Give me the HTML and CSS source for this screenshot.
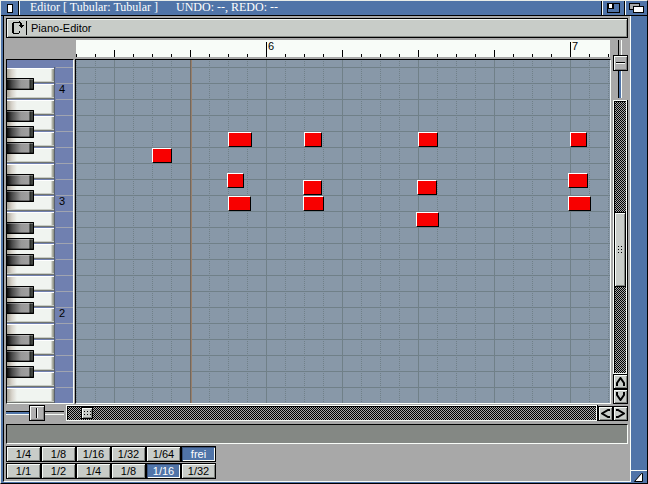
FILE: index.html
```
<!DOCTYPE html>
<html lang="de">
<head>
<meta charset="utf-8">
<title>Piano-Editor</title>
<link rel="stylesheet" href="styles.css">
</head>
<body>
<div class="window">
  <header class="titlebar">
    <button class="gadget close" aria-label="Close"><svg width="6" height="9"><path d="M0 0h6v9H0z"/><path fill="#fff" d="M1 1h4v7H1z"/></svg></button>
    <h1 class="title"><span>Editor [ Tubular: Tubular ]</span><span>UNDO: --, REDO: --</span></h1>
    <button class="gadget zoom" aria-label="Zoom"><svg width="13" height="10"><path fill-rule="evenodd" d="M0 0h13v10H0zM1 1v8h11V1z"/><path d="M1 1h6v5H1z"/><path fill="#fff" d="M2 1h3v4H2z"/></svg></button>
    <button class="gadget depth" aria-label="Depth"><svg width="15" height="10"><path d="M0 0h11v7H0z"/><path fill="#a8a8a8" d="M1 1h9v5H1z"/><path d="M4 3h11v7H4z"/><path fill="#fff" d="M5 4h9v5H5z"/></svg></button>
  </header>
  <div class="frame">
    <main class="content">
      <button class="cycle">
        <svg width="12" height="14"><path d="M1 1h6v1H2v10h5v1H1V12H0V2h1zM7 10h1v2H7zM7 0h1v1h1v1h1v2h2v1h-1v1h-1v1H9V6H8V5H7V4h1V2H7z"/></svg>
        <span class="cycle-label">Piano-Editor</span>
      </button>
      <section class="editor">
        <div class="ruler"><span>6</span><span>7</span></div>
        <div class="piano">
          <div class="keys">
            <i class="key sharp"></i><i class="key"></i><i class="key sharp"></i><i class="key sharp"></i><i class="key sharp"></i><i class="key"></i><i class="key sharp"></i>
            <i class="key sharp"></i><i class="key"></i><i class="key sharp"></i><i class="key sharp"></i><i class="key sharp"></i><i class="key"></i><i class="key sharp"></i>
            <i class="key sharp"></i><i class="key"></i><i class="key sharp"></i><i class="key sharp"></i><i class="key sharp"></i><i class="key"></i><i class="key"></i>
          </div>
          <div class="octaves"><span>4</span><span>3</span><span>2</span></div>
        </div>
        <div class="roll">
          <i class="playhead"></i>
          <i class="note" style="left:76px;top:88px;width:20px"></i>
          <i class="note" style="left:152px;top:72px;width:24px"></i>
          <i class="note" style="left:151px;top:113px;width:17px"></i>
          <i class="note" style="left:152px;top:136px;width:23px"></i>
          <i class="note" style="left:228px;top:72px;width:18px"></i>
          <i class="note" style="left:227px;top:120px;width:19px"></i>
          <i class="note" style="left:227px;top:136px;width:21px"></i>
          <i class="note" style="left:342px;top:72px;width:20px"></i>
          <i class="note" style="left:341px;top:120px;width:20px"></i>
          <i class="note" style="left:340px;top:152px;width:23px"></i>
          <i class="note" style="left:494px;top:72px;width:17px"></i>
          <i class="note" style="left:492px;top:113px;width:20px"></i>
          <i class="note" style="left:492px;top:136px;width:23px"></i>
        </div>
        <div class="side">
          <input class="slider vertical" type="range" min="0" max="42" value="15" aria-label="Vertical zoom">
          <div class="scroll scroll-y">
            <i class="above"></i>
            <div class="thumb"><svg width="4" height="7"><path d="M0 0h1v1H0zM3 0h1v1H3zM0 3h1v1H0zM3 3h1v1H3zM0 6h1v1H0zM3 6h1v1H3z"/></svg></div>
            <i class="below"></i>
          </div>
          <button class="arrow" aria-label="Up"><svg width="9" height="9"><path d="M1 9V6L4.500 1 8 6v3"/></svg></button>
          <button class="arrow" aria-label="Down"><svg width="9" height="9"><path d="M1 0v3l3.500 5L8 3V0"/></svg></button>
        </div>
        <div class="bottom">
          <input class="slider" type="range" min="0" max="42" value="23" aria-label="Horizontal zoom">
          <div class="scroll scroll-x">
            <div class="thumb"><svg width="7" height="4"><path d="M0 0h1v1H0zM3 0h1v1H3zM6 0h1v1H6zM0 3h1v1H0zM3 3h1v1H3zM6 3h1v1H6z"/></svg></div>
          </div>
          <button class="arrow" aria-label="Left"><svg width="9" height="9"><path d="M9 1H7L1 4.500 7 8h2"/></svg></button>
          <button class="arrow" aria-label="Right"><svg width="9" height="9"><path d="M0 1h2l6 3.500L2 8H0"/></svg></button>
        </div>
      </section>
      <div class="status"></div>
      <div class="values">
        <button>1/4</button><button>1/8</button><button>1/16</button><button>1/32</button><button>1/64</button><button class="on">frei</button>
        <button>1/1</button><button>1/2</button><button>1/4</button><button>1/8</button><button class="on">1/16</button><button>1/32</button>
      </div>
    </main>
    <aside class="edge">
      <button class="resize" aria-label="Resize"><svg width="10" height="9"><path fill="#fff" stroke="#000" d="M.5 8.500h8v-8h-1z"/></svg></button>
    </aside>
  </div>
</div>
</body>
</html>
```
FILE: styles.css
```
:root {
  --blue: #5074a8;
  --gray: #a8a8a8;
  --face: #c8ccc8;
  --light: #f8fcf8;
  --lane: #8898a8;
  --line: #708088;
  --keyblue: #7080b0;
}

* { box-sizing: border-box; }

body {
  margin: 0;
  font: 11px/12px "Liberation Sans", Arial, sans-serif;
  color: #000;
}

button {
  margin: 0;
  padding: 0;
  font: inherit;
  color: inherit;
  border: 0;
  border-radius: 0;
}

svg { display: block; }

.window {
  min-height: 100vh;
  display: flex;
  flex-direction: column;
  border: 1px solid #000;
  border-top-color: #e8ece8;
  border-left-color: #e8ece8;
  background: var(--blue);
}

/* Title bar */
.titlebar {
  display: flex;
  height: 15px;
  border-bottom: 1px solid #000;
}

.gadget {
  display: flex;
  align-items: center;
  justify-content: center;
  background: var(--blue);
}

.close {
  width: 18px;
  border-right: 1px solid #000;
}

.title {
  flex: 1;
  display: flex;
  gap: 18px;
  margin: 0;
  padding-left: 10px;
  border-left: 1px solid var(--light);
  border-right: 1px solid #000;
  font: 12px/12px "Liberation Serif", "Times New Roman", serif;
  color: #fff;
  white-space: nowrap;
}

.zoom {
  width: 23px;
  border-left: 1px solid var(--light);
  border-right: 1px solid #000;
}

.depth {
  width: 22px;
  border-left: 1px solid var(--light);
}

/* Window frame */
.frame {
  flex: 1;
  display: flex;
  padding-left: 2px;
}

.content {
  flex: 1;
  min-width: 0;
  display: flex;
  flex-direction: column;
  margin-bottom: 1px;
  padding: 2px;
  border-left: 1px solid #000;
  border-right: 1px solid var(--light);
  border-bottom: 1px solid var(--light);
  background: var(--gray);
}

.edge {
  width: 16px;
  display: flex;
  flex-direction: column;
  justify-content: flex-end;
}

.resize {
  display: flex;
  align-items: center;
  justify-content: center;
  height: 13px;
  border-top: 1px solid var(--light);
  background: var(--blue);
}

.cycle {
  display: flex;
  align-items: center;
  height: 20px;
  padding-left: 5px;
  border: 1px solid #000;
  background: var(--face);
  box-shadow: inset 1px 1px #f0f4f0, inset -1px -1px #888c88;
}

.cycle-label {
  margin-left: 2px;
  padding-left: 4px;
  border-left: 1px solid #000;
  line-height: 14px;
}

/* Editor */
.editor {
  flex: 1;
  display: grid;
  grid-template-columns: 68px minmax(0, 1fr) 15px;
  grid-template-rows: 17px minmax(345px, 1fr) 16px;
  column-gap: 1px;
  row-gap: 1px;
  margin-top: 2px;
}

.ruler {
  grid-column: 2;
  display: flex;
  overflow: hidden;
  margin: 0 2px 0 1px;
  padding-left: 192px;
  background:
    linear-gradient(#000, #000) 190px 100% / 1px 15px no-repeat,
    linear-gradient(#000, #000) 494px 100% / 1px 15px no-repeat,
    linear-gradient(to right, #000 1px, transparent 1px) 38px 100% / 76px 7px repeat-x,
    linear-gradient(to right, #000 1px, transparent 1px) 0 100% / 19px 3px repeat-x,
    var(--light);
}

.ruler span { flex: 0 0 304px; }

.piano {
  grid-row: 2;
  grid-column: 1;
  display: flex;
  margin-top: 1px;
  padding-top: 7px;
  border: 1px solid #000;
  border-right-color: var(--light);
  border-bottom-color: var(--light);
  background: var(--keyblue);
}

.keys {
  width: 48px;
  border-right: 1px solid #586070;
}

.key {
  position: relative;
  display: block;
  height: 16px;
  border-top: 1px solid var(--keyblue);
  border-bottom: 1px solid #707470;
  background: linear-gradient(to right, #a8a498, #d8d4cc 5px, #f0f4f0 10px, #f0f4f0 44px, #b8bab0 45px, #888c80);
  box-shadow: inset 0 1px #fff, inset 0 -1px #c8ccc4;
}

.sharp::after {
  content: "";
  position: absolute;
  z-index: 1;
  left: 0;
  top: 10px;
  width: 26px;
  height: 10px;
  border: 1px solid #000;
  border-left: 0;
  border-radius: 0 1px 1px 0;
  background: linear-gradient(to right, #080808, #484848 5px, #989898 14px, #a0a0a0 22px, #181c18 23px, #404440 24px);
  box-shadow: inset 0 1px rgba(255, 255, 255, .3), inset 0 -1px rgba(0, 0, 0, .35);
}

.octaves {
  flex: 1;
  margin-left: 1px;
  padding-top: 16px;
  background: repeating-linear-gradient(#a0a4b0 0 1px, transparent 1px 16px);
}

.octaves span {
  display: block;
  height: 112px;
  padding-left: 3px;
}

.octaves span:last-child { height: 12px; }

.roll {
  position: relative;
  grid-row: 2;
  grid-column: 2;
  overflow: hidden;
  margin: 1px 1px 0 0;
  border: 1px solid #000;
  border-right-color: var(--light);
  border-bottom-color: var(--light);
  background:
    linear-gradient(var(--line) 1px, transparent 1px) 0 7px / 100% 16px,
    linear-gradient(to right, var(--line) 1px, transparent 1px) 38px 0 / 76px 100%,
    repeating-linear-gradient(var(--lane) 0 1px, transparent 1px 2px),
    linear-gradient(to right, var(--line) 1px, transparent 1px) 0 0 / 19px 100%,
    var(--lane);
}

.playhead {
  position: absolute;
  left: 114px;
  top: 0;
  bottom: 0;
  width: 2px;
  background: linear-gradient(to right, #706860 1px, #98806c 1px);
}

.note {
  position: absolute;
  height: 15px;
  border: 1px solid #000;
  border-top-color: #fff;
  border-left-color: #fff;
  background: #f80000;
}

/* Sliders and scroll bars */
.side {
  grid-row: 1 / 3;
  grid-column: 3;
  display: flex;
  flex-direction: column;
}

.bottom {
  grid-column: 1 / 4;
  display: flex;
  align-items: flex-end;
}

.slider {
  appearance: none;
  flex: none;
  width: 58px;
  height: 16px;
  margin: 0 2px 0 0;
  background: linear-gradient(#000 1px, transparent 1px 3px, var(--light) 3px) 0 50% / 100% 4px no-repeat,
    linear-gradient(var(--blue), var(--blue)) 0 50% / 24px 4px no-repeat;
}

.slider::-webkit-slider-thumb {
  appearance: none;
  width: 16px;
  height: 16px;
  border: 1px solid #000;
  background: linear-gradient(to right, #000 1px, var(--light) 1px) 50% 50% / 2px 10px no-repeat, #b0b0b0;
  box-shadow: inset 1px 1px var(--light), inset -1px -1px #808080;
}

.vertical {
  writing-mode: vertical-lr;
  width: 15px;
  height: 58px;
  margin: 0 0 2px;
  background: linear-gradient(to right, #000 1px, transparent 1px 3px, var(--light) 3px) 5px 0 / 4px 100% no-repeat,
    linear-gradient(var(--blue), var(--blue)) 5px 100% / 4px 30px no-repeat;
}

.vertical::-webkit-slider-thumb {
  width: 15px;
  background: linear-gradient(#000 1px, var(--light) 1px) 50% 50% / 9px 2px no-repeat, #b0b0b0;
}

.scroll {
  flex: 1;
  display: flex;
  border: 1px solid var(--light);
  background: repeating-conic-gradient(#000 0 25%, var(--gray) 0 50%) 0 0 / 2px 2px;
}

.scroll-y {
  flex-direction: column;
  margin-right: 1px;
  box-shadow: inset 1px 1px #000, 1px 0 #000;
}

.scroll-x {
  height: 16px;
  padding: 1px 14px;
  margin-right: 1px;
  box-shadow: inset 1px 1px #000, 1px 0 #000;
}

.above { flex: 110; }
.below { flex: 86; }

.thumb {
  display: flex;
  align-items: center;
  justify-content: center;
  border: 1px solid #000;
  background: var(--face);
  box-shadow: inset 1px 1px var(--light), inset -1px -1px #808480;
}

.scroll-y .thumb { height: 75px; }

.scroll-x .thumb { width: 12px; }

.arrow {
  display: flex;
  align-items: center;
  justify-content: center;
  flex: none;
  width: 15px;
  height: 15px;
  border: 1px solid #000;
  background: var(--face);
  box-shadow: inset 1px 1px var(--light), inset -1px -1px #808480;
}

.arrow path {
  fill: none;
  stroke: #000;
  stroke-width: 2;
}

/* Status line and note values */
.status {
  height: 20px;
  margin-top: 3px;
  border: 1px solid #000;
  border-right-color: var(--light);
  border-bottom-color: var(--light);
  background: #848884;
}

.values {
  display: grid;
  grid-template-columns: repeat(6, 35px);
  row-gap: 1px;
  margin-top: 2px;
}

.values button {
  height: 16px;
  border: 1px solid #000;
  background: var(--face);
  box-shadow: inset 1px 1px var(--light), inset -1px -1px #808480;
}

.values .on {
  background: var(--blue);
  color: #fff;
  box-shadow: inset 1px 1px #385078, inset -1px -1px var(--light);
}
```
